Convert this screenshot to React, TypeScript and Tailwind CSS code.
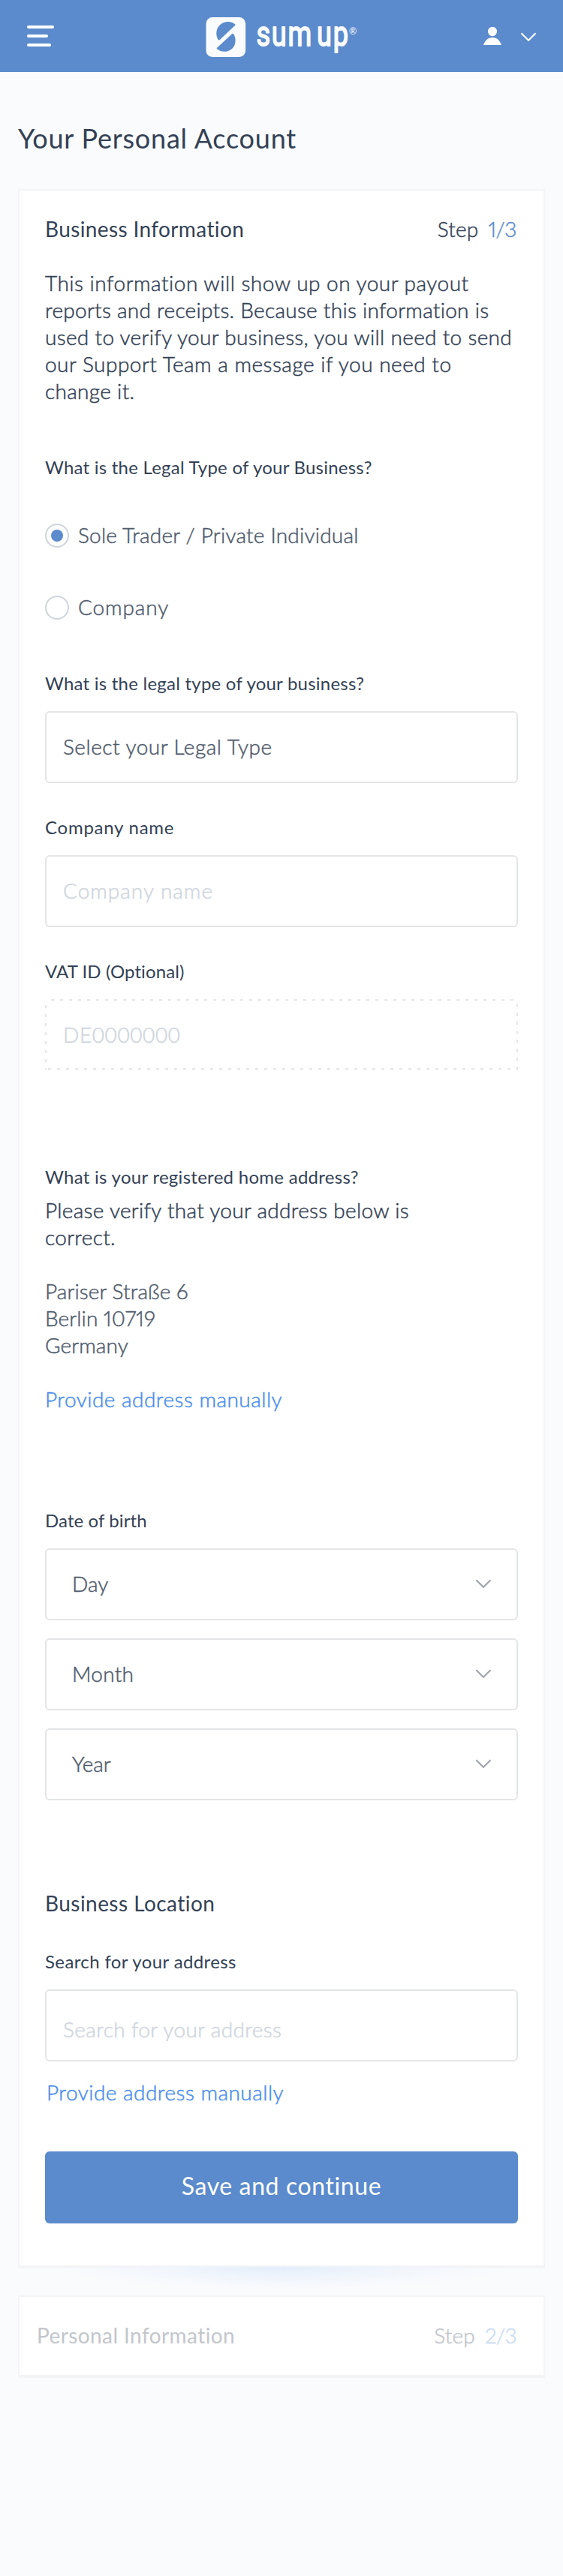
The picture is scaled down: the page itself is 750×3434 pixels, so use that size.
import type { ReactNode } from 'react';

const light = 'font-light [-webkit-text-stroke:0.5px_currentColor]';

function Label({ children, className = '' }: { children: ReactNode; className?: string }) {
  return (
    <div className={`h-8 whitespace-nowrap text-2xl leading-8 text-[#334155] ${className}`}>{children}</div>
  );
}

function Chevron({ className = '', width = 2 }: { className?: string; width?: number }) {
  return (
    <svg viewBox="0 0 22 13" className={`h-[13px] w-[22px] shrink-0 ${className}`} fill="none" stroke="currentColor" strokeWidth={width}>
      <path d="M1.4 1.2 11 10.8 20.6 1.2" />
    </svg>
  );
}

function Logo() {
  return (
    <svg viewBox="0 -6 204 68" className="h-[68px] w-[204px]" fill="#fafbfd">
      <rect x="0.5" y="1" width="52.6" height="53" rx="8.5" />
      <path
        fill="#5b8bcc"
        d="M16.6 30.8C14.2 27 13.6 21.500 15.2 17 18.300 8 30.500 3.500 39 10.300 39.600 10.800 39.600 11.200 39.200 11.700L18.600 31.200C17.800 31.900 17.100 31.700 16.600 30.800Z"
      />
      <path
        fill="#5b8bcc"
        d="M37 23.300C39.800 27 40.500 33.300 38.500 38 35 46.800 22.800 49.800 15.200 43.300 14.600 42.800 14.600 42.300 15.100 41.800L35.200 23.100C35.900 22.500 36.500 22.600 37 23.300Z"
      />
      <text
        transform="translate(67.5 39) scale(0.785 1)"
        fontFamily="Roboto, sans-serif"
        fontSize="46"
        letterSpacing="2.2"
        wordSpacing="-7"
        stroke="#fafbfd"
        strokeWidth="1.8"
        strokeLinejoin="round"
      >
        sum up
      </text>
      <text x="191" y="23.500" fontFamily="Lato, sans-serif" fontSize="12.500" fontWeight="400">®</text>
    </svg>
  );
}

function Header() {
  return (
    <header className="flex h-24 items-center justify-between bg-[#5b8bcc] pl-9 pr-[35px]">
      <button className="flex w-[166px] flex-col gap-2" aria-label="Menu">
        <span className="h-1 w-[36px] rounded-full bg-white" />
        <span className="h-1 w-7 rounded-full bg-white" />
        <span className="h-1 w-8 rounded-full bg-white" />
      </button>
      <div className="pl-px pt-[4px]">
        <Logo />
      </div>
      <div className="flex w-[166px] items-center justify-end gap-[25px] text-white">
        <svg viewBox="0 0 24 24" className="h-6 w-6" fill="#fafbfd">
          <ellipse cx="12" cy="6" rx="6" ry="6.200" />
          <path d="M0 24C2 18 6 14 12 14S22 18 24 24Z" />
        </svg>
        <Chevron className="mt-[3px]" />
      </div>
    </header>
  );
}

function Radio({ label, checked = false, className = '', tracking }: { label: string; checked?: boolean; className?: string; tracking: string }) {
  return (
    <div className={`flex h-8 items-center gap-3 ${className}`}>
      <span className="flex h-8 w-8 items-center justify-center rounded-full border-2 border-[#cfd4dc]">
        {checked && <span className="h-4 w-4 rounded-full bg-[#5b8bcc]" />}
      </span>
      <span className={`pb-0.5 text-[28px] text-[#4f5b6c] ${light} ${tracking}`}>{label}</span>
    </div>
  );
}

const input = `block w-full rounded-md border-2 border-[#e4e5e7] bg-white px-[22px] text-[28px] outline-none placeholder:opacity-100 ${light}`;

const dashed =
  'bg-[repeating-linear-gradient(90deg,#e4e5e7_0_4px,transparent_4px_12px),repeating-linear-gradient(90deg,#e4e5e7_0_4px,transparent_4px_12px),repeating-linear-gradient(180deg,#e4e5e7_0_4px,transparent_4px_12px),repeating-linear-gradient(180deg,#e4e5e7_0_4px,transparent_4px_12px)] bg-[size:620px_2px,624px_2px,2px_88px,2px_88px] bg-[position:8px_0,4px_100%,0_8px,100%_6px] bg-no-repeat';

function Select({ label, className = '' }: { label: string; className?: string }) {
  return (
    <button className="flex h-24 w-full items-center justify-between rounded-md border-2 border-[#e4e5e7] bg-white pl-[34px] pr-[33px]">
      <span className={`pb-0.5 text-[28px] text-[#4f5b6c] ${light} ${className}`}>{label}</span>
      <Chevron className="mb-px text-[#9fa4ac]" width={2.2} />
    </button>
  );
}

export default function App() {
  return (
    <div className="min-h-[3434px] w-[750px] bg-[#fafbfd] font-['Lato',sans-serif] text-[#334155]">
      <Header />
      <main className="px-6 pt-[66px]">
        <h1 className="h-11 text-[36px] leading-[44px] tracking-[0.78px]">Your Personal Account</h1>

        <section className="mt-[46px] border-2 border-b-4 border-[#f3f4f6] bg-white px-[34px] pb-14 pt-[33px]">
          <div className="flex h-9 items-center justify-between text-[28px] leading-9">
            <h2 className="tracking-[0.38px]">Business Information</h2>
            <div className={`mr-[2px] flex gap-[13px] ${light}`}>
              <span className="tracking-[0.2px]">Step</span>
              <span className="tracking-[-0.4px] text-[#5b8bcc] proportional-nums">1/3</span>
            </div>
          </div>

          <p className={`mt-9 whitespace-nowrap text-[28px] leading-9 ${light}`}>
            <span className="block tracking-[0.5px]">This information will show up on your payout</span>
            <span className="block tracking-[0.28px]">reports and receipts. Because this information is</span>
            <span className="block tracking-[0.32px]">used to verify your business, you will need to send</span>
            <span className="block tracking-[0.5px]">our Support Team a message if you need to</span>
            <span className="block tracking-[0.32px]">change it.</span>
          </p>

          <Label className="mt-[68px] tracking-[0.23px]">What is the Legal Type of your Business?</Label>
          <Radio className="mt-[59px]" tracking="tracking-[0.22px]" label="Sole Trader / Private Individual" checked />
          <Radio className="mt-16" tracking="tracking-[0.9px]" label="Company" />

          <Label className="mt-[69px] tracking-[0.23px]">What is the legal type of your business?</Label>
          <input
            className={`${input} mt-[21px] h-24 pb-0.5 tracking-[0.5px] placeholder:text-[#4f5b6c]`}
            placeholder="Select your Legal Type"
          />

          <Label className="mt-[43px] tracking-[0.75px]">Company name</Label>
          <input
            className={`${input} mt-[21px] h-24 pb-0.5 tracking-[1px] placeholder:text-[#d0d5dc]`}
            placeholder="Company name"
          />

          <Label className="mt-[43px] tracking-[0.1px]">VAT ID (Optional)</Label>
          <div
            className={`mt-[21px] flex h-[94px] items-center px-6 text-[28px] tracking-[0.6px] text-[#d0d5dc] ${light} ${dashed}`}
          >
            DE0000000
          </div>

          <Label className="mt-[127px] tracking-[0.28px]">What is your registered home address?</Label>
          <p className={`mt-[10px] text-[28px] leading-9 tracking-[0.3px] ${light}`}>
            Please verify that your address below is
            <br />
            correct.
          </p>
          <address className={`mt-9 text-[28px] not-italic leading-9 tracking-[0.1px] text-[#4f5b6c] proportional-nums ${light}`}>
            Pariser Straße 6
            <br />
            Berlin 10719
            <br />
            Germany
          </address>
          <a className={`mt-9 block h-9 text-[28px] leading-9 tracking-[0.48px] text-[#4a8eea] ${light}`}>
            Provide address manually
          </a>

          <Label className="mt-32 tracking-[0.1px]">Date of birth</Label>
          <div className="mt-[21px] flex flex-col gap-6">
            <Select label="Day" />
            <Select label="Month" className="tracking-[0.3px]" />
            <Select label="Year" />
          </div>

          <h2 className="mt-[119px] h-9 text-[28px] leading-9 tracking-[0.45px]">Business Location</h2>
          <Label className="mt-11 tracking-[0.38px]">Search for your address</Label>
          <input
            className={`${input} mt-[21px] h-24 pt-[9px] tracking-[0.38px] placeholder:text-[#d0d5dc]`}
            placeholder="Search for your address"
          />
          <a className={`ml-[2px] mt-[23px] block h-9 text-[28px] leading-9 tracking-[0.48px] text-[#4a8eea] ${light}`}>
            Provide address manually
          </a>

          <button className="mt-[61px] block h-24 w-full rounded-md bg-[#5b8bcc] pb-[5px] text-[32px] tracking-[0.6px] text-white">
            Save and continue
          </button>
        </section>

        <div className="-mt-[2px] h-[38px] bg-[radial-gradient(ellipse_300px_30px_at_350px_0,#e3edfa_0%,#f0f5fc_45%,transparent_100%)]" />

        <section className="flex h-[110px] items-start justify-between border-2 border-b-4 border-[#f3f4f6] bg-white pl-[23px] pr-9 pt-[33px] text-[28px] leading-9 text-[#c3c6cb]">
          <h2 className="tracking-[0.42px]">Personal Information</h2>
          <div className={`flex gap-[13px] ${light}`}>
            <span className="tracking-[0.2px]">Step</span>
            <span className="tracking-[-0.6px] text-[#cbdcf2] proportional-nums">2/3</span>
          </div>
        </section>
      </main>
    </div>
  );
}
